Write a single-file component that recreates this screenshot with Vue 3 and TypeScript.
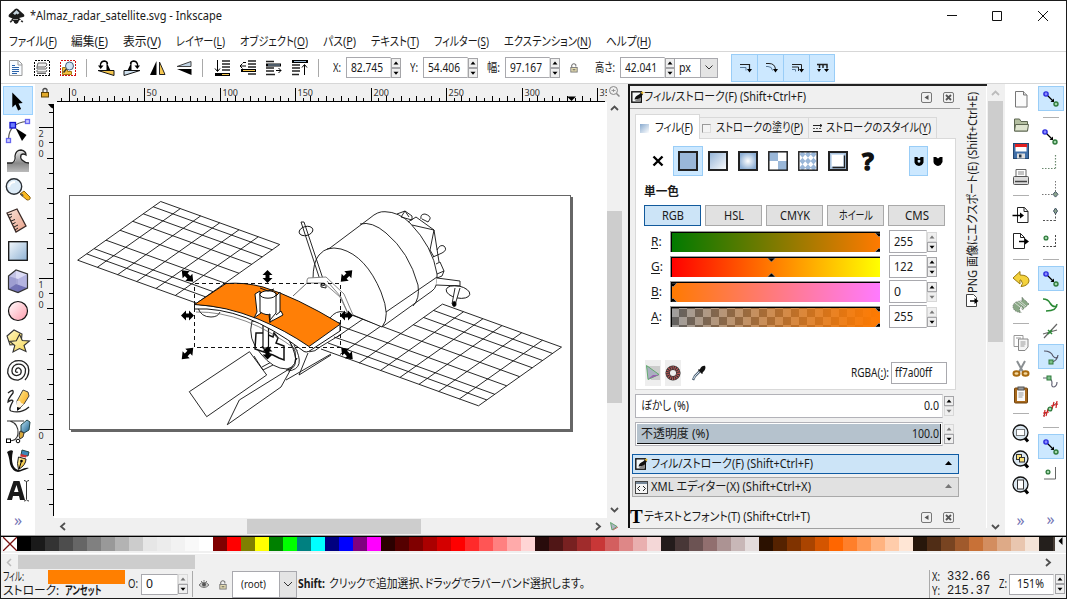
<script setup lang="ts">
interface MenuItem { label: string; key: string; width: number }
interface Tick { pos: number; size: number }

// Stretches or condenses a label horizontally so that it takes the given width.
const vFit = {
  mounted(el: HTMLElement, binding: { value: number }) {
    const natural = el.getBoundingClientRect().width
    el.style.width = `${binding.value}px`
    el.style.transform = `scaleX(${binding.value / natural})`
  },
}

const menus: MenuItem[] = [
  { label: 'ファイル', key: 'F', width: 48 },
  { label: '編集', key: 'E', width: 37 },
  { label: '表示', key: 'V', width: 38 },
  { label: 'レイヤー', key: 'L', width: 49 },
  { label: 'オブジェクト', key: 'O', width: 68 },
  { label: 'パス', key: 'P', width: 33 },
  { label: 'テキスト', key: 'T', width: 48 },
  { label: 'フィルター', key: 'S', width: 55 },
  { label: 'エクステンション', key: 'N', width: 87 },
  { label: 'ヘルプ', key: 'H', width: 45 },
]

const palette: string[] = (
  '000000 1a1a1a 333333 4d4d4d 666666 808080 999999 b3b3b3 cccccc e6e6e6 ececec f2f2f2 f9f9f9 ffffff ' +
  '800000 ff0000 808000 ffff00 008000 00ff00 008080 00ffff 000080 0000ff 800080 ff00ff ' +
  '2b0000 550000 800000 aa0000 d40000 ff0000 ff2a2a ff5555 ff8080 ffaaaa ffd5d5 ' +
  '280b0b 501616 782121 a02c2c c83737 d35f5f de8787 e9afaf f4d7d7 ' +
  '241c1c 483737 6c5353 916f6f ac9393 c8b7b7 e3dbdb ' +
  '2b1100 552200 803300 aa4400 d45500 ff6600 ff7f2a ff9955 ffb380 ffccaa ffe6d5 ' +
  '28170b 502d16 784421 a05a2c c87137 d38d5f deaa87 e9c6af f4e3d7 241f1c'
).split(' ').map((c) => `#${c}`)

const hTicks: Tick[] = []
for (let i = -1; i <= 70; i++) {
  const pos = Math.round(69 + i * 7.545) + 0.5
  hTicks.push({ pos, size: i % 10 === 0 ? 14 : i % 2 === 0 ? 6 : 4 })
}
const hLabels = [0, 50, 100, 150, 200, 250, 300, 350].map((n) => ({ n, x: Math.round(69 + n * 1.509) + 2.5 }))
const vTicks: Tick[] = []
for (let i = -5; i <= 21; i++) {
  const pos = Math.round(429 - i * 15.08) + 0.5
  vTicks.push({ pos, size: i % 10 === 0 ? 15 : i % 2 === 0 ? 7 : 5 })
}
const vLabels = [
  { ch: '2', y: 136.5 }, { ch: '0', y: 146.5 }, { ch: '0', y: 156.5 },
  { ch: '1', y: 287.5 }, { ch: '0', y: 297.5 }, { ch: '0', y: 307.5 },
  { ch: '0', y: 438.5 },
]

// Solar wing wires: lines along both directions of a parallelogram.
function wires(ox: number, oy: number, rows: number[], cols: number[]): string {
  const lx = 119, ly = 43, sx = 83, sy = -58.7
  const a = rows.map((t) => `M${ox + sx * t} ${oy + sy * t}l${lx} ${ly}`)
  const b = cols.map((s) => `M${ox + lx * s} ${oy + ly * s}l${sx} ${sy}`)
  return a.concat(b).join('')
}
const leftWing = wires(77.7, 260.2, [0, 0.108, 0.197, 0.341, 0.51, 0.663, 0.79, 0.91, 1], [0, 0.165, 0.336, 0.496, 0.658, 0.82, 1])
const rightWing = wires(359.5, 362.8, [0, 0.1, 0.196, 0.34, 0.496, 0.648, 0.772, 0.892, 1], [0, 0.177, 0.34, 0.5, 0.666, 0.84, 1])

const handles = [
  { x: 187.5, y: 276, r: 45, k: 1.25 }, { x: 267.5, y: 276.5, r: 90, k: 1 }, { x: 346.5, y: 276, r: -45, k: 1.25 },
  { x: 187.5, y: 315.5, r: 0, k: 1 }, { x: 346.5, y: 315.5, r: 0, k: 1 },
  { x: 187.5, y: 353.5, r: -45, k: 1.25 }, { x: 267.5, y: 353, r: 90, k: 1 }, { x: 347, y: 353.5, r: 45, k: 1.25 },
]

function spin(up = true, down = true): string {
  const box = (y: number, on: boolean) => `<rect x=".5" y="${y}" width="9" height="9" fill="#efefef" stroke="${on ? '#a5a5a8' : '#d8d8d8'}"/>`
  return box(0.5, up) + box(10.5, down) +
    `<path d="M2.5 6.5h5L5 3.6z" fill="${up ? '#000' : '#777'}"/><path d="M2.5 13.8h5L5 16.7z" fill="${down ? '#000' : '#777'}"/>`
}

const grad = (id: string, a: string, b: string) => `<linearGradient id="${id}" x1="0" y1="0" x2="1" y2="1"><stop offset="0" stop-color="${a}"/><stop offset="1" stop-color="${b}"/></linearGradient>`

const tools: string[] = [
  '<path d="M8.3 5.5v15l3.2-3 2.6 6 3-1.4-2.6-5.5 4.2-.6z"/>',
  '<path d="M4.5 22Q5 6 23 4.500" fill="none" stroke="#555" stroke-width="1.2"/><path d="M11.500 11l11 7-4.500 6z"/><rect x="6" y="5.500" width="5.500" height="5.500" fill="#6b7cff" stroke="#11c" stroke-width="1.3"/><rect x="21.500" y="2.500" width="4" height="4" fill="#ccf" stroke="#66e" stroke-width="1.3"/><rect x="2.500" y="21.500" width="4" height="4" fill="#ccf" stroke="#66e" stroke-width="1.3"/>',
  '<linearGradient id="wv" x1="0" y1="0" x2="0" y2="1"><stop offset="0" stop-color="#eee"/><stop offset=".6" stop-color="#888"/><stop offset="1" stop-color="#bbb"/></linearGradient><path d="M3 16h6Q13 14 12 9 13 3 18 3 23 4 22 8 19 6 17 8 16 11 19 14 22 16 25 16V25H3z" fill="url(#wv)"/><path d="M3 16h5Q12 14 11 9 12 3 17 3 22 4 22 8 19 6 17 8 16 11 18 13 21 16 25 16" fill="none" stroke="#222" stroke-width="1.300"/>',
  '<path d="M16 17l4-3 6 6q1 3-3 3z" fill="#f9b820" stroke="#8a6010"/><path d="M17 17l2 2" stroke="#555" stroke-width="2"/><circle cx="10" cy="9.500" r="7.700" fill="#dcebf7" stroke="#2a2f35" stroke-width="1.400"/><path d="M5 10q1-5 6-5" fill="none" stroke="#fff" stroke-width="2"/>',
  grad('ms', '#fbe5da', '#e8a088') + '<path d="M3 6l10-4 9 17-10 6z" fill="url(#ms)" stroke="#3a2a26" stroke-width="1.300"/><path d="M4 8l4-1M5 11l3-1.500M7 14l4-1.500M8.500 17l3-1.500M10 20l4-2M11 23l3-2" stroke="#222"/>',
  grad('rc', '#f4f9fd', '#8fb2d4') + '<rect x="4.700" y="4.700" width="18.600" height="18.600" fill="url(#rc)" stroke="#111" stroke-width="1.300"/>',
  '<path d="M4.500 9L12 3v14l-7.500 5z" fill="#c4c4e6"/><path d="M12 3l11.500 4v14L12 17z" fill="#dcdcf5"/><path d="M4.500 22l7.500-5 11.500 4L14 25.500z" fill="#33338c"/><path d="M4.500 9l9.500 3v13.500L4.500 22z" fill="#8f8fc8" opacity=".7"/><path d="M14 12l9.500-5v14L14 25.500z" fill="#9a9ad4" opacity=".6"/><path d="M4.500 9L12 3l11.500 4v14L14 25.500 4.500 22z" fill="none" stroke="#333" stroke-width="1.200"/>',
  grad('el', '#fff', '#ff9bab') + '<circle cx="14" cy="14" r="9.500" fill="url(#el)" stroke="#111" stroke-width="1.200"/>',
  grad('st', '#fffbd0', '#f5d34a') + '<path d="M3 9l7-6 8 4-1 10-11 1z" fill="url(#st)" stroke="#333" stroke-width="1.100"/><path d="M15.500 7.500l2.800 6 7.200.5-5.500 4.500 2 6-6.500-3-6.500 3.500 1.800-6.500-5-4 6.500-.8z" fill="url(#st)" stroke="#333" stroke-width="1.100"/>',
  '<path d="M14 15Q12 16 11.500 14 12 10.500 15 11 18.500 13 16.500 17 12 20.500 8.500 16.500 6.500 10.500 12 7.500 19 6 21.500 12 22 20.500 14.500 23 6 23.500 3.700 16 3.500 7 11 4 20 2 24 9 26.500 17 21 23" fill="none" stroke="#222" stroke-width="1.300"/>',
  grad('pn', '#fff09a', '#f79a00') + '<path d="M4 6q6-5 5 0-5 6-5 9 4-3 5-1-5 9-2 10 10 3 18-4" fill="none" stroke="#222" stroke-width="1.300"/><path d="M13 14L19 3l5 2 1 4-5 8-6 6z" fill="url(#pn)" stroke="#444"/><path d="M13 14l3 0 1 2 3 1-7 6z" fill="#fff3dc"/><path d="M13 20v4l4-3z" fill="#111"/>',
  grad('bz', '#bde6f7', '#185c8a') + '<path d="M3 4h17M6 4q9 3 8 13-1 7-9 7" fill="none" stroke="#333" stroke-width="1.200"/><rect x="2.500" y="22" width="4" height="3.500" fill="#fff" stroke="#000"/><circle cx="14" cy="24" r="1.800" fill="#fff" stroke="#000"/><path d="M17 8l6-5 3 2-1 8-5 3-3-2z" fill="url(#bz)" stroke="#244"/><path d="M16 14l4 2-1 4-3 2-1-3z" fill="#d8a93b" stroke="#333"/>',
  grad('cl', '#fff9bf', '#e8a600') + '<path d="M3 5Q7 2 9 4 7 12 9 18 11 23 16 23 22 20 25 21 18 24 14 25 8 24 6 17 5 9 3 5z" fill="#111"/><path d="M18 3l7 2-1 4-7-1z" fill="#3d87b8" stroke="#244"/><path d="M17 7l6 1.500-1 2-6-1z" fill="#c33"/><path d="M14.500 10l7.500 2q0 6-7.500 10.500-2-6 0-12.500z" fill="url(#cl)" stroke="#222"/><path d="M15 22l2.500-8" stroke="#000"/><circle cx="17.500" cy="14" r="1.300"/>',
  '<path d="M3 23L9.500 4h6l5.500 19h-5l-1-4H9l-1 4zM10 15h4.500l-2-7z" fill-rule="evenodd" fill="#1a1a1a"/><path d="M20 3.500q2 0 2.500 1.500.5-1.500 2.500-1.500M22.500 5v17M20 24q2 0 2.500-1.500.5 1.500 2.500 1.500" fill="none" stroke="#333"/>',
]

const cmdBar: string[] = [
  '<path d="M3.500 2.500h9l3.500 3.500v11.500H3.500z" fill="#f8fbff" stroke="#999"/><path d="M12 2.500V7h4" fill="none" stroke="#999"/><path d="M6 7.500h3M6 9.500h7M6 11.500h7M6 13.500h7M6 15.500h5" stroke="#2a63ab" stroke-width="1.200"/>',
  '<rect x="2.500" y="2.500" width="15" height="15" fill="none" stroke="#000" stroke-dasharray="2 1" shape-rendering="crispEdges"/><path d="M6 5h8l1 2-2 2H5zM5 9v2h9l1-2M5 12v2h9l1-2M5 15.500h9" fill="#eee" stroke="#666"/>',
  '<rect x="2.500" y="2.500" width="15" height="15" fill="none" stroke="#d01010" stroke-dasharray="2 1" shape-rendering="crispEdges"/><path d="M4.500 9.500h5v4h4v3h-9z" fill="#f5c040" stroke="#a57812"/><circle cx="11.500" cy="8" r="4" fill="#cfe2f3" stroke="#44607c"/><path d="M8.500 11l-3 3.500" stroke="#333" stroke-width="1.500"/>',
]
const rotateIcons: string[] = [
  '<path d="M4.500 8V6q1-3 4-3 3 .5 3 3" fill="none" stroke="#000" stroke-width="1.300"/><path d="M2 7.500h5.500L4.700 11z"/><path d="M10.500 4l4 8.500h-4z"/><path d="M2 12.500h16V17.500z" fill="#f4c650" stroke="#111"/>',
  '<path d="M15.500 8V6q-1-3-4-3-3 .5-3 3" fill="none" stroke="#000" stroke-width="1.300"/><path d="M12.500 7.500H18L15.300 11z"/><path d="M9.500 4l-4 8.500h4z"/><path d="M18 12.500H2V17.500z" fill="#cfe0ee" stroke="#111"/>',
  '<path d="M8.500 3v14H2z"/><path d="M11.500 4v12.500h5.500z" fill="#f4c650" stroke="#222"/>',
  '<path d="M17 3.500v5H3z" fill="#c3d6e6" stroke="#444"/><path d="M3 11h14.500v6z"/>',
]
const orderIcons: string[] = [
  '<path d="M10 3h8M10 6h8M10 9h8M10 12h8" stroke="#222" stroke-width="1.600"/><path d="M3 16.500h15" stroke="#000" stroke-width="3"/><path d="M10 16.500h7" stroke="#f4c650"/><path d="M5.500 2v11M3 10.500l2.500 3 2.500-3" stroke="#000" fill="none"/>',
  '<path d="M10 3h8M10 6h8M10 9h8M10 16h8" stroke="#222" stroke-width="1.600"/><path d="M3 12.500h15" stroke="#000" stroke-width="3"/><path d="M5 12.500h12" stroke="#f4c650"/><path d="M8 4.500H5M2 8h6M4.500 5.500L2 8l2.500 2.500" stroke="#000" fill="none"/>',
  '<path d="M2 3.500h8M2 10h8M2 13h8M2 16.500h9" stroke="#222" stroke-width="1.600"/><path d="M2 7h15" stroke="#000" stroke-width="3"/><path d="M4 7h12" stroke="#9bb8d3"/><path d="M12 12.500h5M14.500 10l2.500 2.500-2.500 2.500" stroke="#000" fill="none"/>',
  '<path d="M2 7h8M2 10h8M2 13h8M2 16.500h7" stroke="#222" stroke-width="1.600"/><path d="M2 3.500h16" stroke="#000" stroke-width="3"/><path d="M4 3.500h12" stroke="#9bb8d3"/><path d="M14.500 17V7M12 9.500l2.500-3 2.500 3" stroke="#000" fill="none"/>',
]
const affect: string[] = [
  '<path d="M5 6.500h9.500v5" fill="none" stroke="#222" stroke-width="1.200"/><path d="M5 9.500h6v3" fill="none" stroke="#5b7a99"/><path d="M12 11h5l-2.500 3.500z"/>',
  '<path d="M5 5.500h3q6 0 6.500 6" fill="none" stroke="#222"/><path d="M5 8.500h2q4 0 4.500 4" fill="none" stroke="#5b7a99"/><path d="M12 11h5l-2.500 3.500z"/>',
  '<path d="M5 6.500h9.500v5M5 9h6.500v4" fill="none" stroke="#222"/><path d="M5 11.500h3.500v2" fill="none" stroke="#5b7a99"/><path d="M12 11h5l-2.500 3.500z"/>',
  '<path d="M5 6.500h10v4M7.500 6v4M11 6v4" fill="none" stroke="#222" stroke-width="1.500"/><path d="M5 11l2 3 2-3zM12 11l2.500 3 2.500-3z"/>',
]
const lockIcon = '<path d="M3 6V3.500Q5 .5 7.500 3V5" fill="none" stroke="#777" stroke-width="1.200"/><rect x="2" y="6" width="7" height="5" fill="#e4dbb0" stroke="#777"/><path d="M4 8.500h3" stroke="#555"/>'

const sheet = '<path d="M4.500 2.500h8l3.500 3.500v12H4.500z" fill="#fbfbfb" stroke="#777"/><path d="M12.500 2.500V6H16" fill="#ddd" stroke="#777"/>'
const lens = '<path d="M13 14l4 4.500" stroke="#000" stroke-width="3"/><circle cx="9.500" cy="9.500" r="7.500" fill="#dbe7f0" stroke="#111" stroke-width="1.300"/>'
const commands: string[] = [
  sheet,
  '<path d="M3.500 16V4h5l1.500 2.500h6.500V16z" fill="#b4bfa0" stroke="#5d6650"/><path d="M3.500 16l1-6.500h13l-1 6.500z" fill="#dfe5cf" stroke="#5d6650"/>',
  '<rect x="2.500" y="2.500" width="15" height="15" fill="#3f6fa8" stroke="#23466f"/><path d="M4 3h12v4H4z" fill="#e12020"/><path d="M4.500 6h11v4.500h-11z" fill="#fff"/><path d="M6 12.500h8v5H6z" fill="#ddd"/><path d="M8 13.500h2.500v3H8z" fill="#234"/>',
  '<path d="M5 10V2.500h10V10" fill="#fff" stroke="#666"/><path d="M7 5h6M7 7h6" stroke="#888"/><rect x="2.500" y="9.500" width="15" height="8" rx="1" fill="#dcdcdc" stroke="#555"/><path d="M4 14.500h12" stroke="#444" stroke-width="1.500"/>',
  '-',
  '<path d="M6.500 2.500h7l3.500 4v11H6.500z" fill="#fff" stroke="#222"/><path d="M13 2.500v4h4" fill="none" stroke="#222"/><path d="M1.500 10.500h8" stroke="#000" stroke-width="1.500"/><path d="M9 7.500l4 3-4 3z"/>',
  '<path d="M2.500 2.500h7l4 4v11h-11z" fill="#fff" stroke="#222"/><path d="M9.500 2.500v4h4" fill="none" stroke="#222"/><path d="M8 10.500h7" stroke="#000" stroke-width="1.500"/><path d="M14 7.500l4 3-4 3z"/>',
  '-',
  '<path d="M9 2.500v3.500q9 0 9 6-1 5-8 5.500 3-3 0-6.500H9v4L2 9z" fill="#f4d23c" stroke="#9a7a10"/>',
  '<path d="M11 2.500v3.500q-9 0-9 6 1 5 8 5.500-3-3 0-6.500h1v4L18 9z" fill="#8aa886" stroke="#5c6a5c" stroke-dasharray="1 1"/><path d="M4 8l9 7M6 6l9 7M9 6l6 5" stroke="#d5dcd3"/>',
  '-',
  '<path d="M3 2.500h9v11H3z" fill="#fff" stroke="#999"/><path d="M7.500 6h9.500v8l-3 3.500H7.500z" fill="#f5f5f5" stroke="#888"/><path d="M5 5h5M9.500 9h5M9.500 11h5M9.500 13h4" stroke="#999"/>',
  '<path d="M6 2l6 11M14 2L8 13" stroke="#8a8f92" stroke-width="2"/><ellipse cx="5.500" cy="14.500" rx="3" ry="2.200" fill="#f4d9a0" stroke="#a86a10" stroke-width="2"/><ellipse cx="14.500" cy="14.500" rx="3" ry="2.200" fill="#f4d9a0" stroke="#a86a10" stroke-width="2"/>',
  '<rect x="3.500" y="3" width="13" height="15" rx="1" fill="#a8691c" stroke="#70430d"/><rect x="6" y="5" width="8" height="11" fill="#fafafa"/><rect x="7" y="2" width="6" height="3" fill="#999" stroke="#555"/><path d="M7.500 8h5M7.500 10h5M7.500 12h4" stroke="#999"/>',
  '-',
  lens + '<rect x="5.500" y="6.500" width="8" height="6" fill="#fff" stroke="#000" stroke-dasharray="1 1"/>',
  lens + '<rect x="5.500" y="5.500" width="5" height="5" fill="#fbe27a" stroke="#333"/><rect x="8.500" y="8.500" width="5" height="4.500" fill="#fbe27a" stroke="#333"/>',
  lens + '<rect x="6.500" y="5" width="6" height="9" fill="#fff" stroke="#333"/>',
]

const dot = (x: number, y: number) => `<circle cx="${x}" cy="${y}" r="1.900" fill="#a5d8ae" stroke="#2f7a3c" stroke-width="1.300"/>`
const snapMain = '<path d="M6 6l6 6" stroke="#000" stroke-width="1.300"/><path d="M9.500 13h3.500V9.500z"/><circle cx="5" cy="5" r="2.100" fill="#8a8aff" stroke="#2a2add" stroke-width="1.400"/><circle cx="15" cy="15" r="2" fill="#a5d8ae" stroke="#2f7a3c" stroke-width="1.400"/>'
interface Snap { art: string; on?: boolean }
const snaps: Snap[] = [
  { art: snapMain, on: true },
  { art: '-' },
  { art: snapMain },
  { art: '<path d="M15.500 2v14M2 15.500H15" fill="none" stroke="#6c8a70" stroke-dasharray="1.500 1.500" stroke-width="1.200"/>' },
  { art: '<path d="M15.500 2v11M2 15.500H13" fill="none" stroke="#777" stroke-dasharray="1.500 1.500"/><path d="M15.500 12.500l2.500 2.800-2.500 2.800-2.500-2.800z" fill="#8ca48c" stroke="#456"/>' },
  { art: '<path d="M15.500 8v8M3 15.500H15" fill="none" stroke="#555" stroke-dasharray="2 1.500"/><path d="M15.500 3l2 3-2 3-2-3z" fill="#8ca48c" stroke="#456"/>' },
  { art: '<path d="M15.500 4v12M3 15.500H15" fill="none" stroke="#444" stroke-dasharray="2 1.500"/>' + dot(6, 7) },
  { art: '-' },
  { art: snapMain, on: true },
  { art: '<path d="M3 4q5 0 7 4 3 5 7 3M17 9q0 7-11 7" fill="none" stroke="#2b8a36" stroke-width="1.500"/>' },
  { art: '<path d="M17 3L4 17M3 13l14-4" fill="none" stroke="#666" stroke-width="1.200"/><path d="M8 9l4 4M12 9l-4 4" stroke="#2b8a36" stroke-width="1.500"/>' },
  { art: '<path d="M3 4q7 0 9 5 2 3 5 1M17 8q-1 6-6 7" fill="none" stroke="#556" stroke-width="1.200"/>' + '<rect x="8" y="13" width="4" height="4" fill="#7cc088" stroke="#2f7a3c"/>', on: true },
  { art: '<path d="M3 5h5q4 1 4 5-1 4 2 4 3-1 3-5" fill="none" stroke="#667" stroke-width="1.200"/><rect x="7" y="3" width="4" height="4" fill="#7cc088" stroke="#2f7a3c"/>' },
  { art: '<path d="M3 17l14-14" stroke="#888"/><path d="M5 11l-1 7M8 10l-2 7M3 14l6-1M14 3l-2 7M17 2l-1 7M11 7l7-2" stroke="#c22" stroke-width="1.200"/>' + dot(10, 10) },
  { art: '-' },
  { art: snapMain, on: true },
  { art: '<path d="M15.500 4v12H4" fill="none" stroke="#666"/>' + dot(8, 9) },
]

const fillIcon = '<rect x=".8" y=".8" width="9.500" height="10.400" fill="#f4f7f7" stroke="#111" stroke-width="1.400"/><path d="M3 10.500Q6 9 9.500 5v5.500z" fill="#888"/><path d="M3.500 8.500Q4 5 8 3.500l2.500-2 1.500 1.500-1.500 2.500Q9 8 3.500 8.500z" fill="#111"/><path d="M10.500 1l1.500 1.500" stroke="#e8b92a" stroke-width="2"/>'

const paints = [
  '<rect x="1" y="1" width="18" height="18" fill="#9ab7d8" stroke="#222" stroke-width="2"/>',
  grad('p1', '#8fb0d5', '#fff') + '<rect x="1" y="1" width="18" height="18" fill="url(#p1)" stroke="#222" stroke-width="2"/>',
  '<radialGradient id="p2"><stop offset="0" stop-color="#fff"/><stop offset="1" stop-color="#8fb0d5"/></radialGradient><rect x="1" y="1" width="18" height="18" fill="url(#p2)" stroke="#222" stroke-width="2"/>',
  '<rect x="1" y="1" width="18" height="18" fill="#fff"/><path d="M1 1h9v9H1zM10 10h9v9h-9z" fill="#9ab7d8"/><rect x=".8" y=".8" width="18.400" height="18.400" fill="none" stroke="#222" stroke-width="1.500"/>',
  '<rect x="1" y="1" width="18" height="18" fill="#fff"/><path d="M4.500 0l3 3.300-3 3.400-3-3.400zM10 0l3 3.300-3 3.400-3-3.400zM15.500 0l3 3.300-3 3.400-3-3.400zM4.500 6.700l3 3.300-3 3.400-3-3.400zM10 6.700l3 3.300-3 3.400-3-3.400zM15.500 6.700l3 3.300-3 3.400-3-3.400zM4.500 13.300l3 3.300-3 3.400-3-3.400zM10 13.300l3 3.300-3 3.400-3-3.400zM15.500 13.300l3 3.300-3 3.400-3-3.400z" fill="#9ab7d8"/><rect x=".8" y=".8" width="18.400" height="18.400" fill="none" stroke="#222" stroke-width="1.500"/>',
  '<rect x="1" y="1" width="18" height="18" fill="#a9c2dd" stroke="#222" stroke-width="2"/><rect x="3.500" y="3.500" width="12" height="12" fill="#fff" stroke="#cde"/><path d="M4.500 16.500h12v-12" fill="none" stroke="#222" stroke-width="1.300"/>',
]

const colorTabs = [
  { label: 'RGB', width: 22 }, { label: 'HSL', width: 20 }, { label: 'CMYK', width: 30 },
  { label: 'ホイール', width: 34 }, { label: 'CMS', width: 24 },
]
const channels = [
  { key: 'R', value: '255', width: 19, pos: 1, up: false, down: true },
  { key: 'G', value: '122', width: 19, pos: 0.478, up: true, down: true },
  { key: 'B', value: '0', width: 7, pos: 0, up: true, down: false },
  { key: 'A', value: '255', width: 19, pos: 1, up: false, down: true },
]
const dockLeft = '<rect x=".5" y=".5" width="10" height="10" rx="1.500" fill="none" stroke="#777"/><path d="M7.500 3v5l-4-2.500z" fill="#555"/>'
const dockClose = '<rect x=".5" y=".5" width="10" height="10" rx="1.500" fill="none" stroke="#777"/><path d="M3 3l5 5M8 3L3 8" stroke="#555" stroke-width="1.800"/>'
</script>

<template>
  <div class="window">
    <header class="titlebar">
      <svg class="logo" width="17" height="17" viewBox="0 0 17 17">
        <path d="M8.500 .5q1.500 0 3 2l4.500 4q1 2-1 2.500l-4 1 2 1.500-2 1q-.5 3-3 3.500-2.500-1-2.500-3l-3-.5 2-2-3.500-1.500Q0 8 1 6.500l4.500-4q1.500-2 3-2z" fill="#1b1b1b" />
        <path d="M8.500 2l3 3-2 1.500-1-1-1.500 1.500-2-1.500z" fill="#c4d2dc" /><path d="M4 13l-2 1M13 13l2 .8" stroke="#333" stroke-width="1.500" />
        <path d="M5 11.500h5" stroke="#999" />
      </svg>
      <span class="fit title" v-fit="192">*Almaz_radar_satellite.svg - Inkscape</span>
      <svg class="controls" width="103" height="12" viewBox="0 0 103 12">
        <path d="M0 5.500h10M45.500 1.500h9v9h-9zM91 1l10 10M101 1L91 11" fill="none" stroke="#111" />
      </svg>
    </header>

    <nav class="menubar">
      <span v-for="m in menus" :key="m.key" class="fit" v-fit="m.width">{{ m.label }}(<u>{{ m.key }}</u>)</span>
    </nav>

    <div class="toolbar">
      <svg v-for="(a, i) in cmdBar" :key="'c' + i" class="tb-icon" viewBox="0 0 20 20" v-html="a" />
      <i class="vsep" />
      <svg v-for="(a, i) in rotateIcons" :key="'r' + i" class="tb-icon" viewBox="0 0 20 20" v-html="a" />
      <i class="vsep" />
      <svg v-for="(a, i) in orderIcons" :key="'o' + i" class="tb-icon" viewBox="0 0 20 20" v-html="a" />
      <i class="vsep last" />
      <div class="field fx"><span class="fit" v-fit="8">X:</span></div>
      <div class="entry"><span class="fit" v-fit="32">82.745</span></div>
      <svg class="spin" viewBox="0 0 10 20" v-html="spin()" />
      <div class="field fy"><span class="fit" v-fit="8">Y:</span></div>
      <div class="entry"><span class="fit" v-fit="32">54.406</span></div>
      <svg class="spin" viewBox="0 0 10 20" v-html="spin()" />
      <div class="field fw"><span class="fit" v-fit="13">幅:</span></div>
      <div class="entry"><span class="fit" v-fit="32">97.167</span></div>
      <svg class="spin" viewBox="0 0 10 20" v-html="spin()" />
      <svg class="lock" viewBox="0 0 11 12" v-html="lockIcon" />
      <div class="field fh"><span class="fit" v-fit="20">高さ:</span></div>
      <div class="entry"><span class="fit" v-fit="32">42.041</span></div>
      <svg class="spin" viewBox="0 0 10 20" v-html="spin()" />
      <div class="unit"><span class="fit" v-fit="12">px</span></div>
      <div class="drop"><svg width="8" height="5" viewBox="0 0 8 5"><path d="M.5.5L4 4 7.500.5" fill="none" stroke="#333" /></svg></div>
      <div class="toggles">
        <div v-for="(a, i) in affect" :key="i" class="toggle"><svg width="20" height="20" viewBox="0 0 20 20" v-html="a" /></div>
      </div>
    </div>

    <main class="work">
      <aside class="toolbox">
        <div v-for="(t, i) in tools" :key="i" class="tool" :class="{ active: i === 0 }">
          <svg width="28" height="28" viewBox="0 0 28 28" v-html="t" />
        </div>
        <div class="more">»</div>
      </aside>

      <section class="editor">
        <div class="view">
          <svg class="canvas" width="572" height="434" viewBox="35 84 572 434">
            <rect x="35" y="84" width="572" height="434" fill="#f0f0f0" />
            <rect x="54" y="102" width="553" height="416" fill="#fff" />
            <g stroke="#000" shape-rendering="crispEdges">
              <path d="M57 101.500H605M53.500 104V516" />
              <line v-for="(t, i) in hTicks" :key="'h' + i" :x1="t.pos" :x2="t.pos" :y1="101.500 - t.size" y2="101.500" />
              <line v-for="(t, i) in vTicks" :key="'v' + i" :x1="53.500 - t.size" x2="53.500" :y1="t.pos" :y2="t.pos" />
            </g>
            <g class="ruler-text">
              <text v-for="l in hLabels" :key="l.n" :x="l.x" y="95.500">{{ l.n }}</text>
              <text v-for="(l, i) in vLabels" :key="'n' + i" x="38.500" :y="l.y">{{ l.ch }}</text>
            </g>
            <path d="M567 96.500h9l-4.500 4.500zM48 104h5v4.500l-2-1z" />
            <rect x="41.500" y="92.500" width="7" height="4.500" fill="#e1a92b" stroke="#5c4208" /><path d="M43 92v-2.500q2-2 4 0V92" fill="none" stroke="#444" stroke-width="1.200" />
            <path d="M71 430.500H571.500V197" fill="none" stroke="#666" stroke-width="3" />
            <rect x="69.500" y="195.500" width="501" height="234" fill="#fff" stroke="#666" shape-rendering="crispEdges" />

            <g fill="none" stroke="#111" stroke-width=".9">
              <path :d="leftWing" />
              <path :d="rightWing" />
              <path d="M401 333.500L353 315.500M388 343L340 326M376 351.300L334 337M368 357L328 343M360 363L321 349M363 319L337 337M381 326L340 354.500" />
              <!-- hull -->
              <path d="M382 327L345 311 320 300 313 279Q313 262 319 255 323 250 330 248L370 218Q378 211 385 211.700 399 212 410 223 433 247 437 274 438 287 432 291z" fill="#fff" stroke="none" />
              <path d="M313 279Q313 262 319 255 323 250 330 248L370 218Q378 211 385 211.700 399 212 410 223 433 247 437 274 438 287 432 291L382 327 353 315" />
              <path d="M327 249Q334 247 341 249 366 256 381 292 391 317 382 327M360 224Q372 221 386 233 409 252 418 285 420 299 413 306M386 312L437 277" />
              <path d="M397 214L405 211 412 216 412 220 401 217M401 217L405 211 409 217M408 222L416 217 434 230 412 225M421 219Q420 214 425 214 431 216 430 219L428 222 422 219M434 230L430 250 434 257M434 230L439 262M437 250Q440 244 444 246 448 250 442 253L433 257M436 264L440 262 444 271 442 276 437 278M437 274L444 271" />
              <path d="M437 278L460 281 460 286 436 285" fill="#fff" />
              <ellipse cx="458" cy="292" rx="12" ry="6" transform="rotate(12 458 292)" />
              <path d="M455 288L452 304 455 305 460 288" fill="#fff" />
              <ellipse cx="454.300" cy="304" rx="1.800" ry="2.600" fill="#000" />
              <!-- antenna rod -->
              <path d="M301 222L322 286 325 285 304 222zM321 284l5 0 0 4-5-1z" />
              <ellipse cx="306" cy="231" rx="7" ry="4.500" transform="rotate(-15 306 231)" />
              <path d="M307 280L308 278 326 277 344 294 353 315 350 317 340 297 324 283 307 283zM327 281L341 297 348 314" stroke="#777" fill="#fff" />
              <path d="M307 283L293 296" stroke="#555" />
              <!-- lower modules -->
              <path d="M249.500 351.700L189.300 391.700 206.700 416.700 266.700 375z" fill="#fff" />
              <path d="M227.300 424.700L239.300 400 290 368.500 297 358 281 387z" fill="#fff" />
              <path d="M254 356L263 370 283 360M262 367L290 352M286 380L331 354M299 375L331 355M299 375L308 353" />
              <path d="M252 321Q247 339 261 354 273 369 287 369 298 367 295 351 286 331 264 323z" fill="#fff" />
              <path d="M290 342Q303 369 286 370M294 345Q307 369 288 371" />
              <path d="M256 333L264 333 273 337 274 333 278 338 276 343 284 346 284 360 279 358 273 355 264 352 255 349z" stroke-width="1.500" fill="#fff" />
              <path d="M263 325V348H268.500V325M262 346l4 6 5-5" fill="#fff" stroke-width="1.200" />
              <path d="M299 346Q310 357 320 347L340 335" />
              <path d="M198 308Q201 317 211 317 218 317 220 312M330 318Q336 310 344 312L351 315" />
            </g>
            <path d="M194.500 304V309Q244 306 302 350 306 354 311 350L340 331V323z" fill="#fff" stroke="#111" />
            <path d="M196 312Q245 311 298 351" fill="none" stroke="#555" stroke-width=".7" />
            <path d="M194.500 304.500L226 283.500Q244 282 263 287 296 297 340.500 324L309 346.500Q285 330 258 319 226 306 194.500 304.500z" fill="#ff7f06" stroke="#111" />
            <g fill="#fff" stroke="#111" stroke-width="1">
              <path d="M260 291L255 294 257 312 254 318 261 313z" />
              <path d="M276 296L280 292V312L270 322V305z" />
              <path d="M260 293V312Q267 316 270 314V320L276 313V293z" />
              <path d="M270 323L269 315M270 322L283 315 281 311 276 315" />
              <ellipse cx="268" cy="294.500" rx="8" ry="3.700" />
              <path d="M260 288L268 291 274 289" fill="none" />
            </g>
            <rect x="194.500" y="283.500" width="146" height="64" fill="none" stroke="#111" stroke-width="1" stroke-dasharray="4 3" shape-rendering="crispEdges" />
            <path v-for="(h, i) in handles" :key="'s' + i" d="M-6.500 0L-1.500 -5V-2H1.500V-5L6.500 0 1.500 5V2H-1.500V5z" :transform="`translate(${h.x} ${h.y}) rotate(${h.r}) scale(${h.k} 1)`" />
          </svg>
          <div class="vscroll">
            <svg width="15" height="434" viewBox="0 0 15 434">
              <rect y="127" width="15" height="192" fill="#cdcdcd" />
              <circle cx="6.500" cy="6.500" r="4" fill="#eee" stroke="#888" /><path d="M9.500 9.500l3 3" stroke="#888" stroke-width="1.500" /><path d="M4.500 6.500h4M6.500 5v3" stroke="#888" stroke-width=".8" />
              <path d="M4 26l3.500-3.500L11 26M4 424l3.500 3.500L11 424" fill="none" stroke="#505050" stroke-width="1.800" />
            </svg>
          </div>
        </div>
        <svg class="hscroll" width="587" height="17" viewBox="35 518 587 17">
          <rect x="247" y="519" width="174" height="15" fill="#cdcdcd" />
          <path d="M65 523l-4 3.500 4 3.500M596 523l4 3.500-4 3.500" fill="none" stroke="#505050" stroke-width="1.800" />
          <path d="M610.500 522.500l6.500 4-5 3.500z" fill="#b0b4c4" stroke="#4a9a58" stroke-width=".8" /><path d="M613 530l5-3" stroke="#b44" stroke-width=".8" />
        </svg>
      </section>

      <section class="dock">
        <div class="dock-main">
          <div class="dock-title">
            <svg width="13" height="12" viewBox="0 0 13 12" v-html="fillIcon" />
            <span class="fit" v-fit="162">フィル/ストローク(F) (Shift+Ctrl+F)</span>
            <svg class="d1" width="11" height="11" viewBox="0 0 11 11" v-html="dockLeft" />
            <svg width="11" height="11" viewBox="0 0 11 11" v-html="dockClose" />
          </div>

          <div class="tabs">
            <div class="tab t1 on"><i class="sw" /><span class="fit" v-fit="38">フィル(<u>F</u>)</span></div>
            <div class="tab t2"><i class="sw hollow" /><span class="fit" v-fit="87">ストロークの塗り(<u>P</u>)</span></div>
            <div class="tab t3">
              <svg width="10" height="9" viewBox="0 0 10 9"><path d="M0 1.500h9M0 7.500h9" stroke="#222" /><path d="M0 4.500h9" stroke="#555" stroke-dasharray="2 1" /><path d="M7 0l2 1.500L7 3" fill="none" stroke="#222" /></svg>
              <span class="fit" v-fit="105">ストロークのスタイル(<u>Y</u>)</span>
            </div>
          </div>

          <div class="page">
            <div class="paints">
              <svg class="none" width="12" height="12" viewBox="0 0 12 12"><path d="M1.500 1.500l9 9M10.500 1.500l-9 9" stroke="#000" stroke-width="2.400" /></svg>
              <div v-for="(p, i) in paints" :key="i" class="paint" :class="{ on: i === 0 }"><svg width="20" height="20" viewBox="0 0 20 20" v-html="p" /></div>
              <div class="q">?</div>
              <div class="rule on"><svg width="10" height="11" viewBox="0 0 10 11"><path d="M.5 1h3l.5 1.500h2L6.500 1h3v5.500q-1 3-4.500 3.500Q1.500 9.500 .5 6.500z" /><path d="M3.700 4v2q1.300 1.500 2.600 0V4z" fill="#cde6fb" /></svg></div>
              <div class="rule"><svg width="10" height="11" viewBox="0 0 10 11"><path d="M.5 1l2.500 0 2 1.500 2-1.500h2.500v5q-1 3-4.500 4Q1 9 .5 6z" /></svg></div>
            </div>
            <div class="heading"><span class="fit" v-fit="35">単一色</span></div>
            <div class="modes">
              <div v-for="(c, i) in colorTabs" :key="c.label" class="mode" :class="{ on: i === 0 }"><span class="fit" v-fit="c.width">{{ c.label }}</span></div>
            </div>
            <div v-for="c in channels" :key="c.key" class="channel">
              <span class="ch-label"><u>{{ c.key }}</u>:</span>
              <div class="slider" :class="c.key">
                <svg class="marks" width="208" height="19" viewBox="0 0 208 19">
                  <path :d="`M${1 + c.pos * 206 - 4} 0h8l-4 4zM${1 + c.pos * 206 - 4} 19h8l-4-4z`" stroke="#aaa" stroke-width=".6" />
                </svg>
              </div>
              <div class="entry ch"><span class="fit" v-fit="c.width">{{ c.value }}</span></div>
              <svg class="spin" viewBox="0 0 10 20" v-html="spin(c.up, c.down)" />
            </div>
            <div class="rgba">
              <svg class="cms" width="16" height="26" viewBox="0 0 16 26"><rect width="16" height="26" fill="#eee" /><path d="M1 6h14v14H6z" fill="#ccc" /><path d="M1.500 5.500l12.500 9-11 5z" fill="#aab0c0" stroke="#48a455" stroke-width=".8" /><path d="M3 19l5-4h6z" fill="#9a5fb0" /></svg>
              <svg class="cms" width="16" height="26" viewBox="0 0 16 26"><rect width="16" height="26" fill="#eee" /><circle cx="8" cy="13" r="5.300" fill="none" stroke="#333" stroke-width="4.500" /><circle cx="8" cy="13" r="5.300" fill="none" stroke="#b55" stroke-width="3.500" stroke-dasharray="1 1" /></svg>
              <svg class="dropper" width="16" height="18" viewBox="0 0 16 18"><path d="M9 7L4 12l-2 4" stroke="#567" stroke-width="2.500" fill="none" /><path d="M9 7L4 12l-1.500 3" stroke="#cfe0ee" fill="none" /><path d="M7.500 5.500l4 4M9.500 6q1-3.500 4-3.500 1 2.500-2.500 5.500z" fill="#111" stroke="#111" stroke-width="1.500" /></svg>
              <span class="fit rgba-l" v-fit="38">RGBA(<u>:</u>):</span>
              <div class="entry hex"><span class="fit" v-fit="37">ff7a00ff</span></div>
            </div>
          </div>

          <div class="amount a1">
            <div class="bar"><span class="fit" v-fit="48">ぼかし (%)</span><span class="fit end" v-fit="15">0.0</span></div>
            <svg class="spin" viewBox="0 0 10 20" v-html="spin(true, false)" />
          </div>
          <div class="amount a2">
            <div class="bar"><div class="filled"><span class="fit" v-fit="68">不透明度 (%)</span><span class="fit end" v-fit="27">100.0</span></div></div>
            <svg class="spin" viewBox="0 0 10 20" v-html="spin(false, true)" />
          </div>

          <div class="row on">
            <svg width="13" height="12" viewBox="0 0 13 12" v-html="fillIcon" />
            <span class="fit" v-fit="162">フィル/ストローク(F) (Shift+Ctrl+F)</span>
            <svg class="arrow" width="7" height="4" viewBox="0 0 7 4"><path d="M0 4h7L3.500 0z" /></svg>
          </div>
          <div class="row">
            <svg width="13" height="13" viewBox="0 0 13 13"><rect x=".5" y=".5" width="12" height="12" fill="#f5f5f5" stroke="#444" /><path d="M1 2h11" stroke="#789" stroke-width="2" /><path d="M5 5L2.500 7.500 5 10M8 5l2.500 2.500L8 10" fill="none" stroke="#222" /></svg>
            <span class="fit" v-fit="160">XML エディター(X) (Shift+Ctrl+X)</span>
            <svg class="arrow" width="7" height="4" viewBox="0 0 7 4"><path d="M0 4h7L3.500 0z" fill="#777" /></svg>
          </div>
          <div class="dock-title second">
            <span class="tee">T</span>
            <span class="fit" v-fit="166">テキストとフォント(T) (Shift+Ctrl+T)</span>
            <svg class="d1" width="11" height="11" viewBox="0 0 11 11" v-html="dockLeft" />
            <svg width="11" height="11" viewBox="0 0 11 11" v-html="dockClose" />
          </div>
        </div>
        <div class="dock-side">
          <svg width="26" height="230" viewBox="960 85 26 230">
            <text class="side-text" transform="translate(977 292) rotate(-90)" textLength="201" lengthAdjust="spacingAndGlyphs">PNG 画像にエクスポート(E) (Shift+Ctrl+E)</text>
            <path d="M966.500 293.500h7l3 3v9h-10z" fill="#fff" stroke="#444" /><path d="M970 300h5" stroke="#000" stroke-width="1.500" /><path d="M974.500 297l4 3-4 3z" />
          </svg>
        </div>
      </section>

      <div class="dock-scroll">
        <svg width="15" height="451" viewBox="0 0 15 451">
          <rect y="17" width="15" height="241" fill="#cdcdcd" />
          <path d="M4 11l3.500-3.500L11 11" fill="none" stroke="#bbb" stroke-width="1.800" /><path d="M4 441l3.500 3.500L11 441" fill="none" stroke="#505050" stroke-width="1.800" />
        </svg>
      </div>

      <aside class="rail commands">
        <template v-for="(c, i) in commands" :key="i">
          <i v-if="c === '-'" class="hsep" />
          <div v-else class="cell"><svg width="20" height="20" viewBox="0 0 20 20" v-html="c" /></div>
        </template>
        <div class="more r1">»</div>
      </aside>
      <aside class="rail snaps">
        <template v-for="(s, i) in snaps" :key="i">
          <i v-if="s.art === '-'" class="hsep" :class="{ first: i === 1 }" />
          <div v-else class="cell" :class="{ on: s.on }"><svg width="20" height="20" viewBox="0 0 20 20" v-html="s.art" /></div>
        </template>
        <div class="more r2">»</div>
      </aside>
    </main>

    <div class="palette">
      <svg class="nofill" width="14" height="14" viewBox="0 0 14 14"><rect width="14" height="14" fill="#fff" /><path d="M0 0l14 14M14 0L0 14" stroke="#7a1010" stroke-width="1.300" /></svg>
      <i v-for="(c, i) in palette" :key="i" class="swatch" :style="{ background: c }" />
      <i class="swatch cut" />
      <svg class="pal-arrow" width="5" height="8" viewBox="0 0 5 8"><path d="M4.500 0v8L.5 4z" /></svg>
    </div>
    <div class="pal-scroll">
      <svg width="16" height="14" viewBox="0 0 16 14"><path d="M10 4L6.500 7.500 10 11" fill="none" stroke="#bbb" stroke-width="1.500" /></svg>
      <div class="pal-thumb" />
      <svg class="pal-right" width="10" height="14" viewBox="0 0 10 14"><path d="M3 4l4 3.500L3 11" fill="none" stroke="#505050" stroke-width="1.800" /></svg>
    </div>

    <footer class="status">
      <div class="style-labels"><span class="fit" v-fit="27">フィル:</span><span class="fit" v-fit="42">ストローク:</span></div>
      <div class="style-vals"><div class="orange" /><span class="fit unset" v-fit="41">アンセット</span></div>
      <span class="fit olabel" v-fit="10">O:</span>
      <div class="entry op"><span class="fit" v-fit="7">0</span></div>
      <svg class="spin" viewBox="0 0 10 20" v-html="spin(false, true)" />
      <i class="vline" />
      <svg class="eye" width="12" height="10" viewBox="0 0 12 10"><path d="M1 6q5-6 10 0-5 5-10 0zM3 2l1 1M6 1v1M9 2L8 3" fill="#ccc" stroke="#777" /><circle cx="6" cy="5.500" r="2" fill="#555" /></svg>
      <svg class="lock2" width="10" height="11" viewBox="0 0 11 12" v-html="lockIcon" />
      <div class="layer"><span class="fit" v-fit="25">(root)</span></div>
      <div class="drop big"><svg width="10" height="6" viewBox="0 0 10 6"><path d="M1 1l4 4 4-4" fill="none" stroke="#333" /></svg></div>
      <span class="fit shift" v-fit="27">Shift:</span>
      <span class="fit hint" v-fit="256">クリックで追加選択、ドラッグでラバーバンド選択します。</span>
      <div class="coords">
        <div class="coord"><span class="fit" v-fit="8">X:</span><b class="num">332.66</b></div>
        <div class="coord"><span class="fit" v-fit="8">Y:</span><b class="num">215.37</b></div>
      </div>
      <span class="fit zlabel" v-fit="8">Z:</span>
      <div class="entry zoom"><span class="fit" v-fit="27">151%</span></div>
      <svg class="spin" viewBox="0 0 10 20" v-html="spin()" />
    </footer>
  </div>
</template>

<style>
html, body { margin: 0; background: #1b1b1b; overflow: hidden; }
</style>

<style scoped>
.window {
  box-sizing: border-box; width: 1067px; height: 599px; border: 1px solid #1b1b1b;
  background: #f0f0f0; color: #1a1a1a; overflow: hidden;
  font: 12px/16px "Noto Sans", "Noto Sans CJK JP", sans-serif;
  display: flex; flex-direction: column; font-feature-settings: "palt";
}
.window * { box-sizing: border-box; }
svg { display: block; flex: none; }
.fit { display: inline-block; flex: none; white-space: nowrap; transform-origin: 0 50%; }
u { text-decoration: none; border-bottom: 1px solid currentColor; display: inline-block; line-height: 13px; }
i { display: block; flex: none; }

.titlebar { height: 30px; flex: none; background: #fff; display: flex; align-items: center; }
.logo { margin-left: 7px; }
.title { margin-left: 5px; font-size: 12px; }
.controls { margin-left: auto; margin-right: 16px; }
.menubar { height: 20px; flex: none; background: #fff; padding: 2px 0 0 8px; display: flex; gap: 15px; align-items: center; font-size: 12.500px; }
.menubar .fit:first-child { margin-right: -1px; }
.toolbar { height: 33px; flex: none; background: #fff; border-top: 1px solid #d7d7d7; border-bottom: 1px solid #d7d7d7; display: flex; align-items: center; padding-left: 5px; }
.tb-icon { width: 20px; height: 20px; margin-right: 6px; }
.vsep { width: 1px; height: 18px; background: #a9a9a9; margin: 0 9px 0 2px; }
.vsep.last { margin-right: 0; }
.entry { flex: none; width: 45px; height: 21px; border: 1px solid #a9a9ae; border-right-color: #ddd; background: #fff; padding-left: 4px; display: flex; align-items: center; }
.spin { width: 10px; height: 20px; }
.field { flex: none; display: flex; }
.fx { width: 27px; padding-left: 14px; }
.fy { width: 22px; padding-left: 9px; }
.fw { width: 27px; padding-left: 9px; }
.fh { width: 41px; padding-left: 16px; }
.lock { width: 10px; height: 11px; margin-left: 9px; }
.unit { width: 26px; height: 20px; border: 1px solid #a9a9ae; border-left: 0; padding-left: 4px; display: flex; align-items: center; }
.drop { width: 17px; height: 20px; background: #e4e4e4; border: 1px solid #a9a9ae; border-left: 0; display: flex; align-items: center; justify-content: center; }
.toggles { display: flex; margin-left: 13px; height: 28px; }
.toggle { width: 26px; border: 1px solid #99cdf7; border-right-width: 0; background: #cce8ff; display: flex; align-items: center; justify-content: center; }
.toggle:last-child { border-right-width: 1px; }

.work { height: 451px; flex: none; display: flex; }
.toolbox { width: 34px; flex: none; background: #fff; padding: 2px 2px 0; }
.tool { height: 30px; display: flex; justify-content: center; align-items: center; }
.tool.active { height: 29px; margin-bottom: 1px; background: #cce8ff; border: 1px solid #99d1ff; }
.more { text-align: center; color: #7474b4; font: 16px/20px "Noto Sans", sans-serif; height: 20px; }
.toolbox .more { margin-top: 4px; }
.editor { width: 587px; flex: none; }
.view { display: flex; height: 434px; }
.ruler-text text { font: 9px "Noto Sans", sans-serif; fill: #333; }

.dock { width: 359px; margin-left: 6px; border-left: 2px solid #111; border-top: 2px solid #222; flex: none; display: flex; height: 444px; }
.dock-main { width: 330px; flex: none; }
.dock-side { width: 28px; border-right: 1px solid #fff; }
.side-text { font: 12px "Noto Sans", "Noto Sans CJK JP", sans-serif; font-feature-settings: "palt"; fill: #1a1a1a; }
.dock-title { height: 23px; padding-left: 1px; border-bottom: 1px solid #a0a0a0; display: flex; align-items: center; }
.dock-title .d1 { margin-left: 115px; margin-right: 11px; }
.tabs { height: 24px; margin: 5px 0 0 5px; display: flex; align-items: flex-end; }
.tab { height: 21px; border: 1px solid #d9d9d9; border-bottom: 0; border-left: 0; display: flex; align-items: center; background: #f0f0f0; }
.tab.on { height: 25px; margin-bottom: -1px; background: #fff; border-left: 1px solid #d9d9d9; position: relative; padding-top: 2px; }
.t1 { width: 65px; padding-left: 4px; gap: 6px; }
.t2 { width: 109px; padding-left: 2px; gap: 5px; }
.t3 { width: 128px; padding-left: 4px; gap: 3px; }
.sw { width: 9px; height: 9px; background: linear-gradient(135deg, #87a9ce, #fff); }
.sw.hollow { background: #f4f4f4; border: 1px solid #999; border-right-color: #ddd; border-bottom-color: #ddd; }
.page { width: 321px; height: 252px; margin-left: 5px; background: #fff; border: 1px solid #d9d9d9; }
.paints { height: 30px; margin-top: 7px; display: flex; align-items: center; }
.none { margin: 0 9px 0 16px; }
.paint { width: 30px; height: 30px; display: flex; align-items: center; justify-content: center; }
.paint.on, .rule.on { background: #cce8ff; border: 1px solid #99cdf7; }
.q { width: 30px; text-align: center; font: bold 24px/28px "Noto Sans", sans-serif; color: #111; -webkit-text-stroke: 1.500px #111; }
.rule { width: 19px; height: 30px; display: flex; align-items: center; justify-content: center; }
.rule.on { margin-left: 26px; }
.heading { height: 29px; padding: 8px 0 0 8px; font-weight: bold; font-size: 12px; }
.modes { display: flex; gap: 4px; padding-left: 8px; height: 22px; }
.mode { width: 57px; height: 21px; border: 1px solid #a9a9a9; background: #e1e1e1; display: flex; align-items: center; justify-content: center; }
.mode.on { background: #cce4f7; border-color: #125a9c; }
.modes + .channel { margin-top: 2px; }
.channel { height: 25px; display: flex; align-items: center; }
.ch-label { width: 34px; padding-left: 15px; flex: none; font-size: 12px; white-space: nowrap; }
.slider { width: 210px; height: 21px; border-top: 1px solid #999; border-left: 1px solid #999; box-shadow: inset 1px 1px #000; margin: 0 9px 1px 0; flex: none; padding: 1px 0 0 1px; }
.slider.R { background: linear-gradient(90deg, #007a00, #ff7a00); }
.slider.G { background: linear-gradient(90deg, #f00, #ff0); }
.slider.B { background: linear-gradient(90deg, #ff7a00, #ff7aff); }
.slider.A { background: linear-gradient(90deg, rgba(255,122,0,0), #ff7a00), repeating-conic-gradient(#616161 0 25%, #9f9f9f 0 50%) 0 2px / 16px 16px; }
.entry.ch { width: 38px; height: 23px; }
.rgba { display: flex; align-items: center; height: 26px; margin-top: 31px; padding-left: 9px; }
.cms { margin-right: 4px; }
.dropper { margin-left: 6px; }
.rgba-l { margin-left: 144px; }
.hex { width: 56px; height: 22px; margin-left: 2px; border-right-color: #a9a9ae; padding-left: 3px; }
.amount { margin-left: 5px; display: flex; align-items: center; height: 24px; }
.a1 { margin-top: 4px; }
.a2 { margin-top: 4px; }
.bar { width: 308px; height: 24px; margin-right: 1px; background: #fff; border: 1px solid #b2b2b8; border-right-color: #ddd; display: flex; align-items: center; padding-left: 5px; }
.bar .end { margin-left: auto; margin-right: 3px; }
.a2 .bar { padding: 1px; }
.filled { display: flex; align-items: center; width: 305px; height: 20px; background: #b5c2cd; border-right: 1px solid #111; border-bottom: 1px solid #111; padding-left: 4px; }
.filled .end { margin-right: 1px; }
.row { width: 327px; height: 20px; margin: 3px 0 0 2px; border: 1px solid #a9a9a9; background: #e1e1e1; display: flex; align-items: center; padding-left: 2px; gap: 3px; }
.row.on { margin-top: 8px; border-color: #0f5ba3; background: #cce4f7; }
.arrow { margin: -3px 6px 0 auto; }
.second { margin-top: 9px; padding-left: 0; }
.tee { width: 14px; font: bold 19px/20px "Liberation Serif", serif; color: #000; }
.second .d1 { margin-left: 111px; }
.dock-scroll { width: 15px; margin-left: 1px; flex: none; }
.rail { background: #fff; flex: none; height: 451px; }
.commands { width: 31px; margin-left: 2px; padding-top: 2px; }
.snaps { width: 30px; padding: 2px 1px 0 0; }
.cell { height: 26px; display: flex; align-items: center; justify-content: center; }
.snaps .cell:not(.on) { padding-right: 1px; }
.cell.on { background: #cce8ff; border: 1px solid #99cdf7; width: 26px; height: 25px; margin: 0 0 1px 2px; }
.hsep { height: 1px; width: 16px; background: #b0b0b0; margin: 5px auto 6px; }
.hsep.first { margin: 6px auto; }
.r1 { margin-top: 12px; }
.r2 { margin-top: 23px; }

.palette { height: 18px; flex: none; border-top: 1px solid #a0a0a0; box-shadow: inset 0 1px #000; padding: 1px 0 0 2px; display: flex; }
.swatch { width: 14px; height: 14px; }
.swatch.cut { width: 2px; background: #483e37; }
.pal-arrow { margin: 0 0 0 3px; }
.pal-scroll { height: 17px; flex: none; border-top: 1px solid #fff; padding-top: 1px; display: flex; }
.pal-thumb { width: 177px; height: 14px; margin-left: 1px; background: #cdcdcd; }
.pal-right { margin-left: auto; margin-right: 13px; }
.status { height: 28px; flex: none; display: flex; align-items: center; }
.style-labels { width: 45px; padding-left: 2px; display: flex; flex-direction: column; line-height: 14px; }
.style-vals { width: 79px; padding-left: 2px; display: flex; flex-direction: column; line-height: 14px; }
.orange { height: 14px; width: 77px; background: #ff7f00; }
.unset { margin-left: 17px; font-weight: bold; }
.olabel { margin-left: 3px; }
.op { width: 37px; height: 21px; margin-left: 3px; }
.vline { width: 1px; height: 26px; background: #aaa; margin: 0 5px 0 4px; }
.lock2 { margin: 0 4px 0 8px; }
.layer { width: 48px; height: 27px; background: #fff; border: 1px solid #a9a9ae; font-size: 11px; padding-left: 8px; display: flex; align-items: center; }
.drop.big { height: 27px; }
.shift { font-weight: bold; margin-left: 1px; }
.hint { margin-left: 4px; }
.coords { margin-left: auto; margin-right: 9px; width: 61px; border-left: 1px solid #aaa; padding-left: 2px; line-height: 14px; }
.coord { display: flex; align-items: center; height: 14px; }
.num { font: 12px/14px "Liberation Mono", monospace; margin-left: 7px; }
.zoom { width: 45px; margin: 0 1px 0 2px; padding-left: 7px; }
.status > .spin:last-child { margin-right: 1px; }
</style>
